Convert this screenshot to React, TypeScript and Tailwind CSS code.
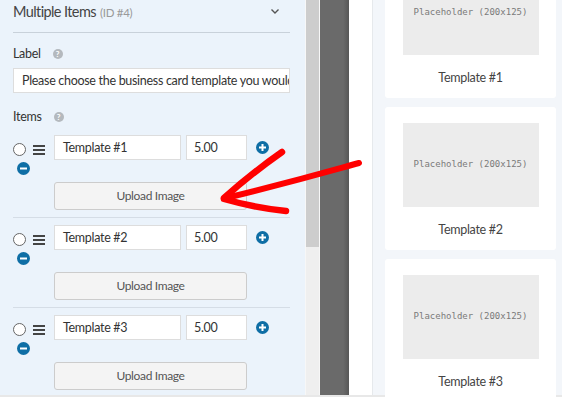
import React from "react";

const font = { fontFamily: 'Lato, "Noto Sans", sans-serif' };

function Help() {
  return (
    <span className="ml-[12px] inline-flex h-[10px] w-[10px] items-center justify-center rounded-full bg-[#b4b9be] text-[8px] font-bold leading-none tracking-normal text-white">
      ?
    </span>
  );
}

function CircleBtn({ minus }: { minus?: boolean }) {
  return (
    <svg width="13" height="13" viewBox="0 0 13 13" className="block">
      <circle cx="6.5" cy="6.5" r="6.5" fill="#0e6ea5" />
      <rect x="3" y="5.5" width="7" height="2" fill="#fff" />
      {!minus && <rect x="5.5" y="3" width="2" height="7" fill="#fff" />}
    </svg>
  );
}

function Item({ n, first }: { n: number; first?: boolean }) {
  return (
    <div className={first ? "" : "border-t border-[#d5dde6] pt-[7px]"}>
      <div className="flex">
        <div className="w-[41px] pt-[8px]">
          <div className="flex items-center">
            <span className="h-[13px] w-[13px] rounded-full border border-[#666] bg-white" />
            <span className="ml-[7px] flex w-[12px] flex-col gap-[2px]">
              <span className="h-[2px] bg-[#444]" />
              <span className="h-[2px] bg-[#444]" />
              <span className="h-[2px] bg-[#444]" />
            </span>
          </div>
          <div className="ml-[4px] mt-[6px]">
            <CircleBtn minus />
          </div>
        </div>
        <div>
          <div className="flex items-center">
            <div className="flex h-[25px] w-[127px] items-center border border-[#dddddd] bg-white pl-[8px] pt-[1px] text-[12.5px] tracking-[-0.3px] text-[#333]">
              Template #{n}
            </div>
            <div className="ml-[5px] flex h-[25px] w-[61px] items-center border border-[#dddddd] bg-white pl-[7px] pt-[1px] text-[12.5px] tracking-[-0.3px] text-[#333]">
              5.00
            </div>
            <div className="ml-[9px]">
              <CircleBtn />
            </div>
          </div>
          <div className="mt-[22px] flex h-[28px] w-[193px] items-center justify-center rounded-[3px] border border-[#cccccc] bg-[#f4f4f4] text-[12px] tracking-[-0.35px] text-[#555]">
            Upload Image
          </div>
        </div>
      </div>
      <div className="h-[7px]" />
    </div>
  );
}

function Card({ n, first }: { n: number; first?: boolean }) {
  return (
    <div
      className={
        "flex h-[143px] flex-col items-center rounded-[3px] bg-white pt-[16px] " +
        (first ? "mt-[-45px]" : "mt-[9px]")
      }
    >
      <div
        className="flex h-[84px] w-[136px] items-center justify-center bg-[#ececec] text-[9px] text-[#7a7a7a]"
        style={{ fontFamily: '"DejaVu Sans Mono", monospace' }}
      >
        Placeholder (200x125)
      </div>
      <div className="mt-[14px] text-[12.5px] tracking-[-0.3px] text-[#444]">Template #{n}</div>
    </div>
  );
}

export default function App() {
  return (
    <div className="relative h-[397px] w-[562px] overflow-hidden bg-white" style={font}>
      <div className="flex h-[395px]">
        {/* Left panel */}
        <div className="w-[305px] bg-[#ebf3fb] pl-[13px] pr-[15px]">
          <div className="flex h-[33px] items-start justify-between border-b border-[#c8d1da]">
            <div className="leading-[22px]">
              <span className="text-[14.5px] tracking-[-0.6px] text-[#444]">Multiple Items</span>{" "}
              <span className="text-[11.5px] tracking-[-0.3px] text-[#999]">(ID #4)</span>
            </div>
            <svg width="10" height="7" viewBox="0 0 10 7" className="mr-[10px] mt-[8px]">
              <path d="M1.5 1.5 L5 5 L8.5 1.5" fill="none" stroke="#555" strokeWidth="1.4" />
            </svg>
          </div>
          <div className="mt-[12px] flex h-[18px] items-center text-[12.5px] tracking-[-0.3px] text-[#333]">
            Label
            <Help />
          </div>
          <div className="mt-[5px] flex h-[25px] items-center overflow-hidden whitespace-nowrap border border-[#dddddd] bg-white pl-[8px] pt-[1px] text-[12.5px] tracking-[-0.3px] text-[#333]">
            Please choose the business card template you would like
          </div>
          <div className="mt-[15px] flex h-[18px] items-center text-[12.5px] tracking-[-0.3px] text-[#333]">
            Items
            <Help />
          </div>
          <div className="mt-[9px]">
            <Item n={1} first />
            <Item n={2} />
            <Item n={3} />
          </div>
        </div>
        {/* Scrollbar */}
        <div className="w-[15px] border-x border-[#f7f7f7] bg-[#efefef]">
          <div className="h-[247px] bg-[#cdcdcd]" />
        </div>
        {/* Dark band */}
        <div className="w-[29px] bg-[linear-gradient(to_right,#6a6a6a_80%,#575757)]" />
        {/* White band */}
        <div className="w-[24px] border-r border-[#e6e9ec] bg-white" />
        {/* Preview */}
        <div className="flex-1 bg-[#f3f6fa] pl-[12px] pr-[6px]">
          <Card n={1} first />
          <Card n={2} />
          <Card n={3} />
        </div>
      </div>
      <div className="h-[2px] bg-[#e8e8e8]" />
      {/* Red arrow annotation */}
      <svg
        className="pointer-events-none absolute left-0 top-0"
        width="562"
        height="397"
        viewBox="0 0 562 397"
      >
        <g fill="none" stroke="#ff0000" strokeLinecap="round" strokeLinejoin="round">
          <path d="M359 163 C 330 171, 300 180, 226 198" strokeWidth="6" />
          <path d="M282 152 C 262 166, 243 181, 224 198" strokeWidth="6.5" />
          <path d="M224 199 C 245 205, 266 209, 286 211" strokeWidth="6.5" />
        </g>
      </svg>
    </div>
  );
}
